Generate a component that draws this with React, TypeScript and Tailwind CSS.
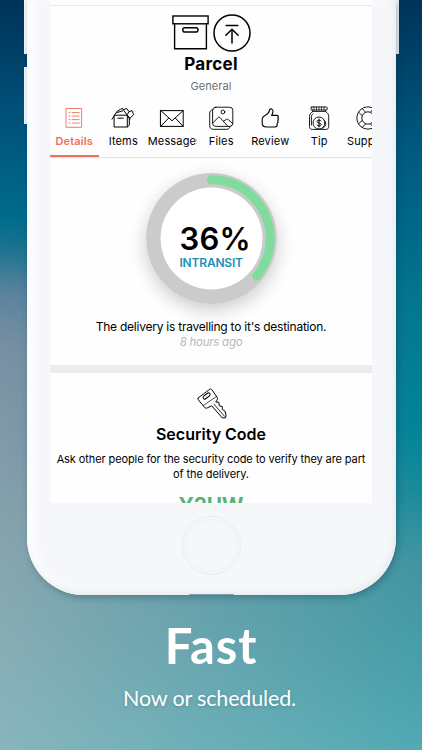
import type { ReactNode } from 'react';

const stroke = {
  fill: 'none',
  stroke: 'currentColor',
  strokeLinecap: 'round' as const,
  strokeLinejoin: 'round' as const
};

function BoxIcon() {
  return (
    <svg width="37" height="36" viewBox="0 0 37 36" {...stroke} strokeWidth="1.4" strokeLinejoin="miter">
      <rect x="0.9" y="1" width="35.2" height="7.8" />
      <path d="M2.6 8.8V33.8H34.4V8.8" />
      <rect x="10.8" y="12.8" width="15.2" height="4.2" rx="2.1" />
    </svg>
  );
}

function UploadIcon() {
  return (
    <svg width="38" height="38" viewBox="0 0 38 38" {...stroke} strokeWidth="1.5">
      <circle cx="19" cy="19" r="18" />
      <path d="M13.2 11.5H24.8M19 29V15.5M12.9 21.3L19 15.2L25.1 21.3" />
    </svg>
  );
}

function DetailsIcon() {
  return (
    <svg width="26" height="26" viewBox="0 0 26 26" {...stroke} strokeWidth="0.9">
      <rect x="5.4" y="3.5" width="15.2" height="18.8" />
      <path d="M8 7.6h.8M8 11.1h.8M8 14.6h.8M8 18.1h.8M11 7.6h7.2M11 11.1h7.2M11 14.6h7.2M11 18.1h7.2" />
    </svg>
  );
}

function ItemsIcon() {
  return (
    <svg width="26" height="26" viewBox="0 0 26 26" {...stroke} strokeWidth="1">
      <path d="M4.5 10.2H17.3V22H4.5zM4.5 10.2L2 14.2M17.3 10.2L19.8 14.2M7.8 13.2h5.4" />
      <path d="M4.6 9.9L7.4 6l3-1.6 1.9-1.2 1.4 2.1L17 9.8M6.8 7.6l6-1.8M19.3 13.5V20.2L17.3 22" />
      <path d="M13.4 4.6l3.3-1.1 2.5 3.2-2.1 2.8M19.2 6.7l2.7-1.1 1.8 4-3.8 3.7-2.1-2.6" />
    </svg>
  );
}

function MessageIcon() {
  return (
    <svg width="26" height="26" viewBox="0 0 26 26" {...stroke} strokeWidth="1">
      <rect x="1.8" y="5.6" width="22.4" height="15.8" />
      <path d="M1.8 5.6L13 15.8L24.2 5.6M1.8 21.4L9.6 13.1M24.2 21.4L16.4 13.1" />
    </svg>
  );
}

function FilesIcon() {
  return (
    <svg width="26" height="26" viewBox="0 0 26 26" {...stroke} strokeWidth="0.9">
      <rect x="4.6" y="2.2" width="20.2" height="19.2" rx="3.2" />
      <path d="M4.6 4.8C2.8 5 1.7 6.3 1.7 8V20.5C1.7 23 3 24.3 5.4 24.3H18.8C20.6 24.3 21.8 23.2 22 21.4" />
      <circle cx="14.9" cy="7" r="1.9" />
      <path d="M4.6 18.2L10 12.6C10.6 12 11.4 12 12 12.6L19.8 21.2M15.4 16.3L18.2 14.5C18.9 14 19.6 14.1 20.2 14.6L24.8 18.6" />
    </svg>
  );
}

function ReviewIcon() {
  return (
    <svg width="26" height="26" viewBox="0 0 26 26" {...stroke} strokeWidth="1.1">
      <path d="M5.2 14.2C5.2 12.2 5.9 11.5 8 10.5C10.7 9.1 12.1 7.8 12.4 5.7C12.6 4.1 13.6 3.5 14.7 4.1C16.9 5.4 15.8 8.3 14.6 10.4H19.8C21.4 10.4 21.8 12 20.8 13C21.6 13.7 21.6 15 20.7 15.7C21.4 16.6 21.1 17.8 20.1 18.4C20.6 20.2 19.9 22 18 22H9.8C6.2 22 5.2 20.8 5.2 18z" />
    </svg>
  );
}

function TipIcon() {
  return (
    <svg width="26" height="26" viewBox="0 0 26 26" {...stroke} strokeWidth="0.9">
      <rect x="5" y="2" width="16.2" height="3" rx="0.8" />
      <path d="M8 2v3M10.5 2v3M13 2v3M15.5 2v3M18 2v3M6.6 5v1.6M19.6 5v1.6" strokeWidth="0.7" />
      <path d="M6.6 6.6C4.3 8 3.5 9.5 3.5 11.5V21.4C3.5 23.5 4.6 24.4 6.4 24.4H19.8C21.8 24.4 22.7 23.5 22.7 21.4V11.5C22.7 9.5 21.9 8 19.6 6.6zM5.4 20v-8.4C5.4 10.4 6 9.4 7 8.7" />
      <circle cx="13" cy="18" r="6" />
      <path d="M18.4 15.4c2.6 2.6 1.6 6-1.6 8" />
      <path d="M15.1 15.9C14.6 14.9 11.1 14.7 11 16.5C10.9 18.3 15.2 17.5 15.2 19.6C15.2 21.4 11.4 21.3 10.9 20M13 14v8" strokeWidth="1" />
    </svg>
  );
}

function SupportIcon() {
  return (
    <svg width="26" height="26" viewBox="0 0 26 26" {...stroke} strokeWidth="0.9">
      <circle cx="13" cy="13" r="11.2" />
      <circle cx="13" cy="13" r="6.2" />
      <path d="M7.2 3.4L10.6 7.3M3.4 7.2L7.3 10.6M3.4 18.8L7.3 15.4M7.2 22.6L10.6 18.7M15.4 7.3L18.8 3.4M18.7 10.6L22.6 7.2M18.8 22.6L15.4 18.7M22.6 18.8L18.7 15.4" />
    </svg>
  );
}

function KeyIcon() {
  return (
    <svg width="30" height="31" viewBox="0 0 30 31" {...stroke} strokeWidth="1">
      <path d="M1.6 9.6L12.6 1.4C13.4 .8 14.2 .9 14.8 1.6L20.2 9.4C20.7 10.2 20.6 11.2 20 12.1L18.8 14L21.8 14.3L22.3 17.8L25.2 18.4L25.4 21.5L28 23.2L29 26.6L28.6 29.8L25.4 30L14.7 17.8L10.3 19.9C9.2 20.4 8.1 20.2 7.4 19.2L1.2 11.6C.6 10.8 .8 10.2 1.6 9.6z" />
      <path d="M17 16.2L27.4 28.2" strokeWidth="0.8" />
      <rect x="5.6" y="6.4" width="8" height="3.2" rx="1.6" transform="rotate(-38 9.6 8)" />
      <path d="M6.4 17.4L19.6 8.4" strokeWidth="0.7" />
    </svg>
  );
}

const tabs: { label: string; icon: ReactNode }[] = [
  { label: 'Details', icon: <DetailsIcon /> },
  { label: 'Items', icon: <ItemsIcon /> },
  { label: 'Messages', icon: <MessageIcon /> },
  { label: 'Files', icon: <FilesIcon /> },
  { label: 'Review', icon: <ReviewIcon /> },
  { label: 'Tip', icon: <TipIcon /> },
  { label: 'Support', icon: <SupportIcon /> }
];

function TabBar() {
  return (
    <div className="flex h-[53px] overflow-hidden border-b border-[#e3e4e6]">
      {tabs.map((tab, i) => (
        <div
          key={tab.label}
          className={`flex w-[49px] shrink-0 flex-col items-center overflow-hidden border-b-2 tracking-[0.15px] ${
            i === 0 ? 'border-[#f0705c] font-semibold text-[#f0705c]' : 'border-transparent text-black'
          }`}
        >
          {tab.icon}
          <span className="mt-[3px] w-full text-center text-[11px] leading-[14px]">{tab.label}</span>
        </div>
      ))}
    </div>
  );
}

function Progress({ value }: { value: number }) {
  const length = 2 * Math.PI * 58.7;
  return (
    <div className="relative mx-auto mt-[15px] h-[131px] w-[131px] rounded-full shadow-[0_6px_18px_rgba(0,0,0,0.2)]">
      <svg width="131" height="131" viewBox="0 0 131 131" fill="none">
        <circle cx="65.5" cy="65.5" r="65.5" fill="#cbcbcb" />
        <circle cx="65.5" cy="65.5" r="51" fill="#fff" />
        <circle
          cx="65.5"
          cy="65.5"
          r="58.7"
          stroke="#80dc9c"
          strokeWidth="9"
          strokeLinecap="round"
          strokeDasharray={`${(length * value) / 100} ${length}`}
          transform="rotate(-90 65.5 65.5)"
        />
      </svg>
      <div className="absolute left-[34px] top-[48px] whitespace-nowrap text-left">
        <div className="text-[31px] font-semibold leading-[36px] tracking-[0.2px]">{value}%</div>
        <div className="text-[12px] font-semibold leading-[12px] tracking-[-0.2px] text-[#2090b8]">INTRANSIT</div>
      </div>
    </div>
  );
}

function Screen() {
  return (
    <div className="mx-auto h-[502.5px] w-[322.5px] overflow-hidden bg-[#fefefe] text-center text-black">
      <div className="h-[6px] border-b border-[#e6e7e9]" />
      <div className="flex items-start justify-center gap-[4px] pl-px pt-[8px]">
        <div className="pt-px">
          <BoxIcon />
        </div>
        <UploadIcon />
      </div>
      <h1 className="mt-px text-[17px] font-bold leading-[22px] tracking-[0.3px]">Parcel</h1>
      <p className="mt-[4px] text-[11px] leading-[14px] tracking-[0.1px] text-[#6e6e6e]">General</p>
      <div className="mt-[12px]">
        <TabBar />
      </div>
      <Progress value={36} />
      <p className="mt-[15px] text-[12px] leading-[16px] tracking-[-0.24px]">The delivery is travelling to it's destination.</p>
      <p className="text-[11.5px] italic leading-[15px] tracking-[-0.25px] text-[#b9b9b9]">8 hours ago</p>
      <div className="mt-[15px] h-[7.5px] bg-[#ececec]" />
      <div className="mt-[15px] flex justify-center pl-px">
        <KeyIcon />
      </div>
      <h2 className="mt-[4.5px] text-[16px] font-semibold leading-[22px]">Security Code</h2>
      <p className="mt-[7px] px-[4px] text-[11px] leading-[15px] tracking-[-0.1px]">
        Ask other people for the security code to verify they are part of the delivery.
      </p>
      <p className="mt-[11px] text-[21px] font-bold leading-[26px] tracking-[-0.2px] text-[#55b477]">Y2UW</p>
    </div>
  );
}

function Phone() {
  return (
    <div className="relative mx-auto w-[369px]">
      <div className="absolute -left-[3px] top-0 h-[53.5px] w-[4px] bg-[#f4f7fb]" />
      <div className="absolute -left-[3px] top-[67px] h-[56.5px] w-[4px] bg-[#f4f7fb]" />
      <div className="absolute -right-[3px] top-0 h-[53.5px] w-[4px] bg-[#edf2f7]" />
      <div className="relative h-[595px] rounded-b-[57px] bg-[#f6f7fa] shadow-[inset_-2px_-3px_6px_#e8ecef,inset_8px_0_9px_#fdfdfd,2px_3px_7px_rgba(0,40,60,0.28)]">
        <Screen />
        <div className="mx-auto mt-[13px] h-[59px] w-[59px] rounded-full border border-[#eaebed] p-[2px]">
          <div className="h-full w-full rounded-full border border-[#f0f1f3]" />
        </div>
      </div>
      <div className="absolute bottom-0 left-[162px] h-[1.5px] w-[45px] rounded-t-full bg-[#7d9fa8]" />
    </div>
  );
}

export default function App() {
  return (
    <div className="relative h-[750px] w-[422px] overflow-hidden bg-[linear-gradient(180deg,#00335a_0px,#005a80_150px,#007690_300px,#008498_430px,#188b9b_490px,#4195a2_560px,#479ea9_650px,#51aab4_750px)]">
      <div className="absolute inset-0 bg-[linear-gradient(180deg,#003358_0px,#005079_110px,#006b8c_215px,#17728f_245px,#5f849e_295px,#7a90a4_350px,#8298a7_430px,#86a3ad_530px,#88b5bc_750px)] [mask-image:linear-gradient(90deg,#000_0%,transparent_100%)]" />
      <div className="relative flex flex-col font-[Inter,'Liberation_Sans',sans-serif]">
        <Phone />
        <div className="flex flex-col items-center font-[Lato,sans-serif] text-white">
          <h2 className="mt-[20px] text-[49px] font-bold leading-[60px] tracking-[0.9px]">Fast</h2>
          <p className="mt-[9px] pr-[3px] text-[21.5px] leading-[28px] tracking-[-0.15px] [text-shadow:0_1px_3px_rgba(0,60,70,0.25)]">
            Now or scheduled.
          </p>
        </div>
      </div>
    </div>
  );
}
